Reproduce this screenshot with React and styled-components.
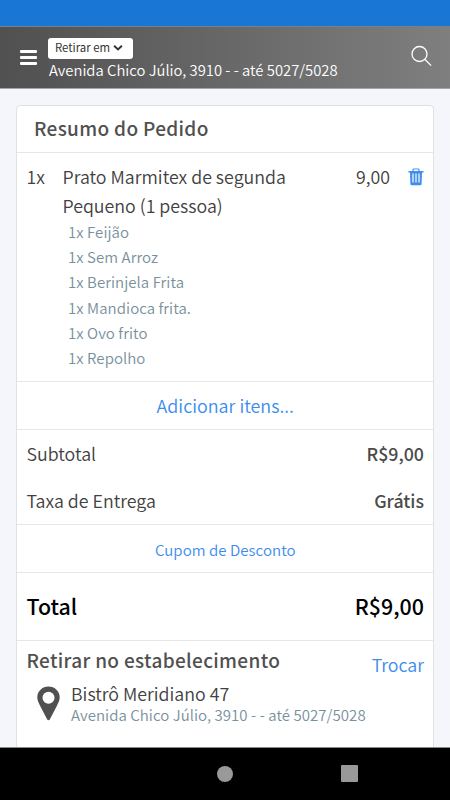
import React from "react";
import styled, { createGlobalStyle } from "styled-components";

const GlobalStyle = createGlobalStyle`
  * { box-sizing: border-box; }
  body { margin: 0; background: #f5f6fb; font-family: "Noto Sans CJK JP", "Noto Sans", sans-serif; color: #4b4b4b; }
`;

const Screen = styled.div`
  width: 450px;
  height: 800px;
  display: flex;
  flex-direction: column;
  overflow: hidden;
  background: #f5f6fb;
`;

const StatusBar = styled.div`
  flex: 0 0 26px;
  background: #1976d5;
`;

const TopBar = styled.header`
  flex: 0 0 63px;
  display: flex;
  align-items: flex-start;
  padding: 0 18px 0 20px;
  background: linear-gradient(90deg, #505050, #7f7f7f);
  border-top: 1px solid #7a8087;
  border-bottom: 1px solid #a5a5a7;
`;

const MenuButton = styled.button`
  width: 17px;
  height: 15px;
  margin-top: 23px;
  padding: 0;
  border: 0;
  background: none;
  display: flex;
  flex-direction: column;
  justify-content: space-between;
`;

const MenuLine = styled.span`
  height: 3px;
  border-radius: 1px;
  background: #fff;
`;

const Destination = styled.div`
  flex: 1;
  margin-left: 11px;
  padding-top: 11px;
  display: flex;
  flex-direction: column;
  align-items: flex-start;
`;

const ModeButton = styled.button`
  height: 21px;
  width: 85px;
  padding: 0 0 3px 7px;
  border: 0;
  border-radius: 3px;
  background: #fff;
  font-family: inherit;
  display: flex;
  align-items: center;
  gap: 3px;
`;

const Address = styled.div`
  padding-left: 1px;
`;

const SearchButton = styled.button`
  margin-top: 18px;
  padding: 0;
  border: 0;
  background: none;
  display: flex;
`;

const Text = styled.span`
  display: block;
  white-space: nowrap;
  font-size: ${(p) => p.$size}px;
  line-height: ${(p) => p.$line || 24}px;
  font-weight: ${(p) => p.$weight || 350};
  color: ${(p) => p.$color || "#414141"};
  letter-spacing: ${(p) => p.$track || 0}px;
`;

const Content = styled.main`
  flex: 1;
  min-height: 0;
  overflow: hidden;
  padding: 16px 16px 0;
`;

const Card = styled.section`
  height: 700px;
  background: #fff;
  border: 1px solid #dfe1e3;
  border-radius: 4px;
`;

const Section = styled.div`
  height: ${(p) => p.$height}px;
  border-bottom: 1px solid #e7e7e7;
  padding: 0 9px 0 9.5px;
`;

const CardHeader = styled(Section)`
  padding: 10px 17px 0;
`;

const ItemSection = styled(Section)`
  display: grid;
  grid-template-columns: 36px 1fr auto 34px;
  align-items: start;
  padding-top: 8px;
`;

const Options = styled.ul`
  list-style: none;
  margin: -1px 0 0;
  padding: 0 0 0 5.5px;
`;

const DeleteButton = styled.button`
  justify-self: end;
  margin-top: 7px;
  padding: 0;
  border: 0;
  background: none;
  display: flex;
`;

const LinkRow = styled(Section)`
  display: flex;
  justify-content: center;
  align-items: center;
`;

const AmountRow = styled.div`
  height: ${(p) => p.$height}px;
  display: flex;
  align-items: center;
  justify-content: space-between;
  padding-bottom: 2px;
`;

const Pickup = styled.div`
  padding: 4px 9px 0 9.5px;
`;

const PickupHeader = styled.div`
  display: flex;
  justify-content: space-between;
  align-items: flex-start;
  height: 37px;
`;

const Place = styled.div`
  display: flex;
  align-items: flex-start;
  padding-left: 10.5px;
  gap: 11px;
`;

const Pin = styled.div`
  padding-top: 4px;
  display: flex;
`;

const Link = styled(Text)`
  color: #3b8cee;
  margin-top: ${(p) => p.$top || 0}px;
`;

const NavBar = styled.nav`
  flex: 0 0 53px;
  display: grid;
  grid-template-columns: 101px 124px 124.5px 1fr;
  align-items: center;
  justify-items: center;
  background: #000;
  border-top: 1px solid #888;
  padding-bottom: 1px;
`;

const HomeKey = styled.span`
  grid-column: 2 / 3;
  justify-self: end;
  width: 16px;
  height: 16px;
  margin-right: -8px;
  border-radius: 50%;
  background: #999;
`;

const RecentKey = styled.span`
  justify-self: end;
  width: 17px;
  height: 17px;
  margin-right: -8px;
  border-radius: 1px;
  background: #999;
`;

const Chevron = () => (
  <svg width="10" height="7" viewBox="0 0 10 7" fill="none">
    <path d="M1.1 1.7 5 5.4 8.9 1.7" stroke="#333" strokeWidth="2" />
  </svg>
);

const SearchIcon = () => (
  <svg width="21" height="22" viewBox="0 0 21 22" fill="none" stroke="#fff" strokeWidth="1.3">
    <circle cx="8.5" cy="9" r="7.5" />
    <path d="m13.8 14.3 6.3 6.3" />
  </svg>
);

const TrashIcon = () => (
  <svg width="16" height="18" viewBox="0 0 16 18" fill="none">
    <path d="M5 3V1.8Q5 1 5.8 1h4.4q.8 0 .8.8V3" stroke="#4691e8" strokeWidth="1.2" />
    <path d="M.5 3h15v1.5H14L13.6 16q0 1.3-1.3 1.3H3.7Q2.4 17.3 2.4 16L2 4.5H.5Z" fill="#3f8eea" />
    <path d="M5 5.5v9M8 5.5v9M11 5.5v9" stroke="#fff" strokeWidth="1.2" />
  </svg>
);

const PinIcon = () => (
  <svg width="23" height="35" viewBox="0 0 23 35">
    <path
      d="M11.5.5C5.2.5.3 5.3.3 11.3c0 3.2 1.4 5.7 3 8.9l6.8 13q1.4 2.2 2.8 0l6.8-13c1.6-3.2 3-5.7 3-8.900C22.700 5.300 17.800.5 11.500.5Z"
      fill="#505050"
    />
    <circle cx="11.5" cy="11.8" r="6" fill="#fff" />
  </svg>
);

const options = ["Feijão", "Sem Arroz", "Berinjela Frita", "Mandioca frita.", "Ovo frito", "Repolho"];

export default function App() {
  return (
    <Screen>
      <GlobalStyle />
      <StatusBar />
      <TopBar>
        <MenuButton aria-label="Menu">
          <MenuLine />
          <MenuLine />
          <MenuLine />
        </MenuButton>
        <Destination>
          <ModeButton>
            <Text $size={11.4} $line={18} $weight={400} $color="#333">Retirar em</Text>
            <Chevron />
          </ModeButton>
          <Address>
            <Text $size={14.8} $line={22} $color="#fff">Avenida Chico Júlio, 3910 - - até 5027/5028</Text>
          </Address>
        </Destination>
        <SearchButton aria-label="Buscar">
          <SearchIcon />
        </SearchButton>
      </TopBar>
      <Content>
        <Card>
          <CardHeader $height={47}>
            <Text $size={19} $track={0.33} $weight={500} $color="#505050">Resumo do Pedido</Text>
          </CardHeader>
          <ItemSection $height={229}>
            <Text $size={17.8} $line={30}>1x</Text>
            <div>
              <Text $size={17.8} $line={30}>Prato Marmitex de segunda</Text>
              <Text $size={17.8} $line={29}>Pequeno (1 pessoa)</Text>
              <Options>
                {options.map((name) => (
                  <li key={name}>
                    <Text $size={15} $track={0.06} $line={25.2} $color="#78909c">1x {name}</Text>
                  </li>
                ))}
              </Options>
            </div>
            <Text $size={17.8} $line={30}>9,00</Text>
            <DeleteButton aria-label="Remover">
              <TrashIcon />
            </DeleteButton>
          </ItemSection>
          <LinkRow $height={48}>
            <Link $size={17.9} $top={-2}>Adicionar itens...</Link>
          </LinkRow>
          <Section $height={95}>
            <AmountRow $height={48}>
              <Text $size={17.8}>Subtotal</Text>
              <Text $size={17.8} $weight={500} $color="#4b4b4b">R$9,00</Text>
            </AmountRow>
            <AmountRow $height={46}>
              <Text $size={17.8}>Taxa de Entrega</Text>
              <Text $size={17.8} $weight={500} $color="#4b4b4b">Grátis</Text>
            </AmountRow>
          </Section>
          <LinkRow $height={48}>
            <Link $size={15} $track={0.06} $top={2}>Cupom de Desconto</Link>
          </LinkRow>
          <Section $height={68}>
            <AmountRow $height={67}>
              <Text $size={21.4} $weight={500} $color="#000">Total</Text>
              <Text $size={21.4} $weight={500} $color="#000">R$9,00</Text>
            </AmountRow>
          </Section>
          <Pickup>
            <PickupHeader>
              <Text $size={19} $track={0.33} $line={30} $weight={500} $color="#505050">Retirar no estabelecimento</Text>
              <Link $size={17.8} $top={7}>Trocar</Link>
            </PickupHeader>
            <Place>
              <Pin><PinIcon /></Pin>
              <div>
                <Text $size={17.8} $line={22}>Bistrô Meridiano 47</Text>
                <Text $size={15} $track={0.05} $line={22} $color="#78909c">Avenida Chico Júlio, 3910 - - até 5027/5028</Text>
              </div>
            </Place>
          </Pickup>
        </Card>
      </Content>
      <NavBar>
        <HomeKey />
        <RecentKey />
      </NavBar>
    </Screen>
  );
}
